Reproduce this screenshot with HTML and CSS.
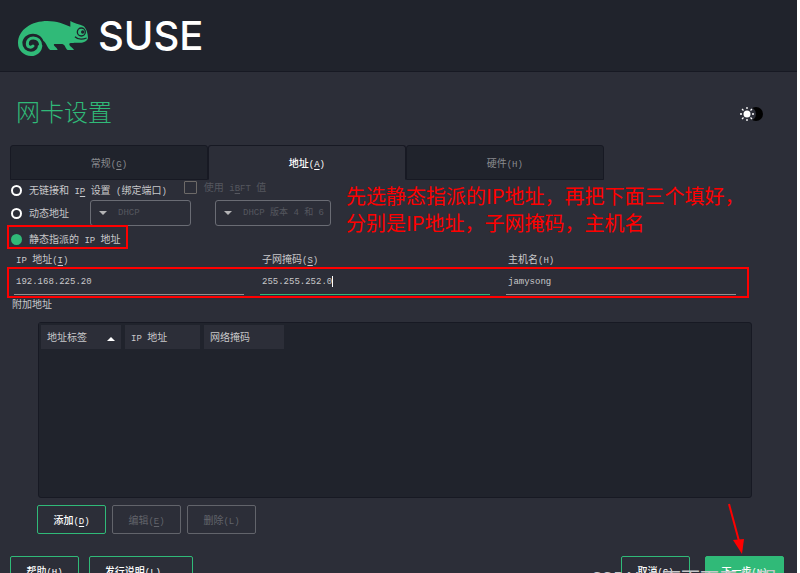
FILE: index.html
```html
<!DOCTYPE html>
<html lang="zh-CN">
<head>
    <meta charset="UTF-8">
    <meta name="viewport" content="width=device-width, initial-scale=1.0">
    <title>网卡设置</title>
    <link rel="stylesheet" href="styles.css">
</head>
<body>
<div class="installer">

    <header class="banner">
        <svg class="logo" viewBox="54 60 210 111">
            <path fill="#30ba78" d="M54 130 C54 88 96 63 142 63 C170 63 192 72 211 80 L211 63 C222 70 238 73 250 78 C258 84 264 98 264 114 C262 124 250 129 236 128 C225 129 212 127 208 131 C207 139 218 141 222 150 L203 150 C196 146 196 134 187 132 L163 132 C157 137 171 141 173 150 L151 150 C142 144 140 130 130 122 C126 110 114 101 99 101 C81 101 67 114 67 130 Z"/>
            <path fill="none" stroke="#30ba78" stroke-width="13" d="M60.500 129 C60.500 148 75 161.500 93 161.500 C109 161.500 120.500 150 120.500 136"/>
            <path fill="none" stroke="#30ba78" stroke-width="9" stroke-linecap="round" d="M122 138 C122 123 113 114 100 114 C88 114 82 122 82 131 C82 141 92 145 99 138"/>
            <circle cx="244" cy="96" r="12" fill="none" stroke="#20232c" stroke-width="4"/>
            <circle cx="248" cy="96" r="5" fill="#20232c"/>
            <path fill="none" stroke="#20232c" stroke-width="4" d="M225 110 C233 118 247 119 260 114"/>
        </svg>
        <span class="brand">SUSE</span>
    </header>

    <div class="title-row">
        <h1>网卡设置</h1>
        <button class="theme" aria-label="切换主题">
            <svg width="24" height="16" viewBox="0 0 24 16">
                <circle cx="16" cy="8" r="7" fill="#000"/>
                <circle cx="9" cy="8" r="7" fill="#2c2e38"/>
                <circle cx="7" cy="8" r="3.5" fill="#fff"/>
                <path stroke="#fff" stroke-width="1.3" d="M7 1v2M7 13v2M0 8h2M12 8h2M2 3l1.5 1.5M10.500 11.500l1.500 1.500M2 13l1.500-1.500M10.500 4.500L12 3"/>
            </svg>
        </button>
    </div>

    <nav class="tabs">
        <button>常规<span class="en">(<u>G</u>)</span></button>
        <button class="active">地址<span class="en">(<u>A</u>)</span></button>
        <button>硬件<span class="en">(H)</span></button>
    </nav>

    <main>
        <div class="row top">
            <input type="radio" name="mode" id="none">
            <label for="none">无链接和<span class="en"> I<u>P</u> </span>设置<span class="en"> (</span>绑定端口<span class="en">)</span></label>
            <div class="ibft">
                <input type="checkbox" id="ibft" disabled>
                <label for="ibft">使用<span class="en"> i<u>B</u>FT </span>值</label>
            </div>
        </div>
        <div class="row">
            <input type="radio" name="mode" id="dynamic">
            <label for="dynamic">动态地址</label>
            <div class="drop first"><select aria-label="协议" disabled><option>DHCP</option></select></div>
            <div class="drop second"><select aria-label="版本" disabled><option>DHCP 版本 4 和 6</option></select></div>
        </div>
        <div class="row">
            <input type="radio" name="mode" id="static" checked>
            <label for="static">静态指派的<span class="en"> IP </span>地址</label>
        </div>

        <div class="fields">
            <div class="field">
                <label for="ip"><span class="en">IP </span>地址<span class="en">(<u>I</u>)</span></label>
                <div class="line"><input type="text" id="ip" value="192.168.225.20"></div>
            </div>
            <div class="field">
                <label for="mask">子网掩码<span class="en">(<u>S</u>)</span></label>
                <div class="line focused"><input type="text" id="mask" value="255.255.252.0"><i class="caret"></i></div>
            </div>
            <div class="field">
                <label for="host">主机名<span class="en">(H)</span></label>
                <div class="line"><input type="text" id="host" value="jamysong"></div>
            </div>
        </div>

        <p class="extra">附加地址</p>

        <div class="list">
            <table>
                <tr>
                    <th class="sorted"><div>地址标签<i class="arrow"></i></div></th>
                    <th class="ip"><span class="en">IP </span>地址</th>
                    <th class="mask">网络掩码</th>
                </tr>
            </table>
        </div>
        <div class="actions">
            <button class="btn">添加<span class="en">(<u>D</u>)</span></button>
            <button class="btn" disabled>编辑<span class="en">(<u>E</u>)</span></button>
            <button class="btn" disabled>删除<span class="en">(L)</span></button>
        </div>
    </main>

    <footer>
        <button class="btn">帮助<span class="en">(H)</span></button>
        <button class="btn notes">发行说明<span class="en">(L)...</span></button>
        <button class="btn cancel">取消<span class="en">(C)</span></button>
        <button class="btn next">下一步<span class="en">(N)</span></button>
    </footer>

    <!-- tutorial notes on top of the dialog -->
    <div class="mark mark-static"></div>
    <div class="mark mark-fields"></div>
    <p class="note">先选静态指派的IP地址，再把下面三个填好，<br>分别是IP地址，子网掩码，主机名</p>
    <svg class="pointer" width="20" height="52" viewBox="0 0 20 52">
        <path d="M2 1L12 38" stroke="#f00" stroke-width="2"/>
        <path d="M6 37L17 36L15 51Z" fill="#f00"/>
    </svg>
    <div class="watermark">CSDN @下雨下天的明</div>
</div>
</body>
</html>
```
FILE: styles.css
```css
* {
    box-sizing: border-box;
}
html {
    background: #fff;
}
body {
    margin: 0 3px 0 0;
    color: #c8c8ca;
    font: 10px/14px "Noto Sans CJK SC", sans-serif;
}
button, input, select {
    font: inherit;
    color: inherit;
    margin: 0;
}
.installer {
    position: relative;
    height: 100vh;
    overflow: hidden;
    background: #2c2e38;
}
/* latin parts and hotkeys */
.en {
    font-family: "Liberation Mono", monospace;
    font-size: 9px;
    line-height: 1;
    white-space: pre;
}
u {
    text-underline-offset: 2px;
}

.banner {
    display: flex;
    align-items: center;
    height: 72px;
    padding: 0 18px;
    background: #20232c;
    border-bottom: 1px solid #171923;
}
.logo {
    width: 70px;
    height: 37px;
    margin-top: 5px;
}
.brand {
    margin-left: 10px;
    color: #fff;
    font: 500 40px/72px Inter, sans-serif;
}

.title-row {
    display: flex;
    justify-content: space-between;
    align-items: center;
    height: 73px;
    padding: 4px 33px 0 16px;
}
h1 {
    margin: 0;
    color: #30ba78;
    font-size: 24px;
    font-weight: 300;
    line-height: 32px;
}
.theme {
    padding: 0;
    border: 0;
    background: none;
    height: 16px;
    margin-top: 6px;
}

.tabs {
    display: flex;
    width: 75%;
    margin-left: 10px;
    padding-right: 4px;
}
.tabs button {
    flex: 1;
    height: 35px;
    padding: 0;
    background: #20232c;
    border: 1px solid #171923;
    border-radius: 3px 3px 0 0;
    color: #8a8b8f;
}
.tabs .active {
    background: none;
    border-bottom-color: transparent;
    color: #fff;
    font-weight: 500;
}

.row {
    display: flex;
    align-items: center;
    padding-left: 11px;
    height: 26px;
}
.top {
    height: 20px;
}
input[type="radio"] {
    appearance: none;
    width: 11px;
    height: 11px;
    margin-right: 7px;
    border: 2px solid #fff;
    border-radius: 50%;
}
input[type="radio"]:checked {
    border-color: #30ba78;
    background: #30ba78;
}
.ibft {
    display: flex;
    align-items: center;
    gap: 7px;
    margin: 0 0 6px 17px;
    color: #55575f;
}
input[type="checkbox"] {
    appearance: none;
    width: 13px;
    height: 13px;
    border: 1px solid #6d6a68;
    border-radius: 1px;
}
.drop {
    display: flex;
    align-items: center;
    height: 26px;
    border: 1px solid #6a6c74;
    border-radius: 3px;
}
.drop::before {
    content: "";
    margin: 0 11px 0 8px;
    border: 4px solid transparent;
    border-top-color: #b4b4b6;
    border-bottom: 0;
}
.drop select {
    flex: 1;
    appearance: none;
    padding: 0;
    border: 0;
    background: none;
    color: #55575f;
    opacity: 1;
    font: 9px/14px "Liberation Mono", "Noto Sans CJK SC", monospace;
}
.first {
    width: 101px;
    margin-left: 21px;
}
.second {
    width: 116px;
    margin-left: 24px;
}

.fields {
    display: grid;
    grid-template-columns: 1fr 1fr 1fr;
    gap: 16px;
    padding: 0 61px 0 14px;
}
.field label {
    display: block;
    padding-left: 2px;
}
.line {
    display: flex;
    align-items: center;
    height: 29px;
    padding: 3px 2px 0;
    border-bottom: 1px solid #94908f;
}
.line input {
    width: 100%;
    padding: 0;
    border: 0;
    background: none;
    font: 9px/14px "Liberation Mono", monospace;
}
.focused {
    border-color: #30ba78;
}
.focused input {
    width: 13ch;
}
.caret {
    width: 1px;
    height: 11px;
    background: #fff;
}
.extra {
    margin: 2px 0 11px 12px;
}

.list {
    height: 176px;
    margin: 0 45px 7px 38px;
    background: #20232c;
    border: 1px solid #171923;
    border-radius: 3px;
}
table {
    border-spacing: 0;
}
th {
    height: 26px;
    padding: 0 6px;
    background: #2c2e38;
    background-clip: padding-box;
    border: solid #20232c;
    border-width: 2px 4px 0 0;
    font-weight: 400;
    text-align: left;
}
th:first-child {
    border-left-width: 2px;
}
.sorted {
    width: 86px;
}
.sorted div {
    display: flex;
    align-items: center;
    justify-content: space-between;
}
.ip {
    width: 79px;
}
.mask {
    width: 84px;
}
.arrow {
    margin-top: 4px;
    border: 4px solid transparent;
    border-bottom-color: #fff;
    border-top: 0;
}

.actions {
    display: flex;
    gap: 6px;
    padding-left: 37px;
}
.btn {
    width: 69px;
    height: 29px;
    padding: 0;
    background: none;
    border: 1px solid #30ba78;
    border-radius: 2px;
    color: #fff;
    font-weight: 500;
}
.btn:disabled {
    border-color: #62646b;
    color: #62646b;
    font-weight: 400;
}
footer {
    display: flex;
    gap: 10px;
    padding: 22px 13px 0 10px;
}
.notes {
    width: 104px;
}
.cancel {
    margin-left: auto;
    margin-right: 5px;
}
.next {
    width: 79px;
    background: #30ba78;
}

/* notes */
.mark {
    position: absolute;
    border: 2px solid #f00;
    pointer-events: none;
}
.mark-static {
    left: 7px;
    top: 225px;
    width: 121px;
    height: 24px;
}
.mark-fields {
    left: 7px;
    top: 267px;
    width: 742px;
    height: 31px;
}
.note {
    position: absolute;
    left: 346px;
    top: 182px;
    margin: 0;
    color: #f00;
    font-size: 20px;
    line-height: 27px;
    white-space: nowrap;
}
.pointer {
    position: absolute;
    left: 727px;
    top: 503px;
}
.watermark {
    position: absolute;
    left: 590px;
    top: 564px;
    color: #c8c8ca;
    font-size: 19px;
    line-height: 28px;
    white-space: nowrap;
}
```
